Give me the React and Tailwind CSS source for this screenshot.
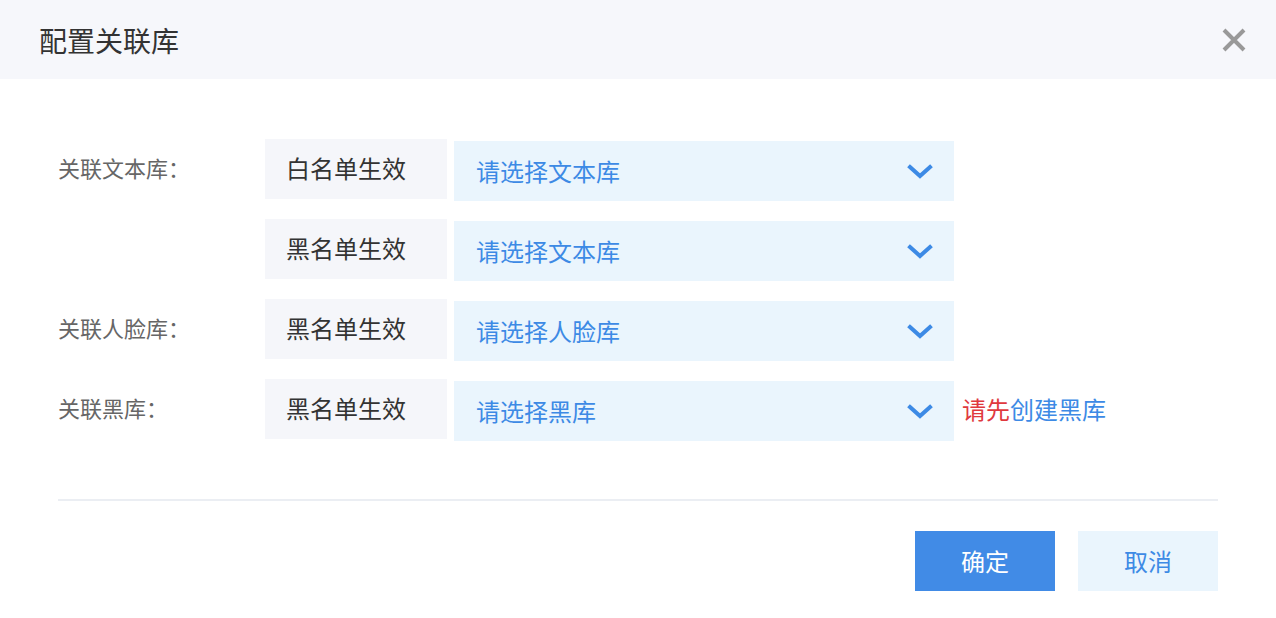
import React from "react";

const font = { fontFamily: '"Noto Sans CJK SC", "Noto Sans", sans-serif' };

function Chevron() {
  return (
    <svg width="26" height="18" viewBox="0 0 26 18" fill="none" className="mt-[2px]">
      <path d="M3 4 L13 13 L23 4" stroke="#3d8ae5" strokeWidth="4" strokeLinecap="square" strokeLinejoin="miter" />
    </svg>
  );
}

function Row({ label, tag, placeholder, extra }) {
  return (
    <div className="flex items-start h-[60px]">
      <div className="w-[207px] h-[60px] flex items-center pb-[4px] text-[22px] text-[#666666] leading-none">
        {label ? <span>{label}：</span> : null}
      </div>
      <div className="w-[182px] h-[60px] bg-[#f5f6fa] flex items-center pl-[21px] pb-[3px] text-[24px] text-[#333333] leading-none">
        {tag}
      </div>
      <div className="ml-[7px] mt-[2px] w-[500px] h-[60px] bg-[#eaf5fd] flex items-center justify-between pl-[22px] pr-[21px] text-[24px] text-[#3d8ae5] leading-none">
        <span>{placeholder}</span>
        <Chevron />
      </div>
      {extra}
    </div>
  );
}

export default function App() {
  return (
    <div className="w-[1276px] h-[618px] bg-white overflow-hidden" style={font}>
      <div className="h-[79px] bg-[#f6f7fb] flex items-center justify-between pl-[39px] pr-[30px]">
        <span className="text-[28px] text-[#333333] leading-none">配置关联库</span>
        <svg width="24" height="24" viewBox="0 0 24 24">
          <path d="M2 2 L22 22 M22 2 L2 22" stroke="#999999" strokeWidth="4" />
        </svg>
      </div>
      <div className="pl-[58px] pr-[58px] pt-[60px]">
        <div className="flex flex-col gap-[20px]">
          <Row label="关联文本库" tag="白名单生效" placeholder="请选择文本库" />
          <Row tag="黑名单生效" placeholder="请选择文本库" />
          <Row label="关联人脸库" tag="黑名单生效" placeholder="请选择人脸库" />
          <Row
            label="关联黑库"
            tag="黑名单生效"
            placeholder="请选择黑库"
            extra={
              <div className="ml-[8px] h-[60px] flex items-center text-[24px] leading-none">
                <span className="text-[#e0393e]">请先</span>
                <span className="text-[#3d8ae5]">创建黑库</span>
              </div>
            }
          />
        </div>
        <div className="mt-[60px] h-[2px] bg-[#ebeef3]" />
        <div className="mt-[30px] flex justify-end gap-[23px]">
          <button className="w-[140px] h-[60px] bg-[#418be6] text-white text-[24px] leading-none">确定</button>
          <button className="w-[140px] h-[60px] bg-[#eaf5fd] text-[#3d8ae5] text-[24px] leading-none">取消</button>
        </div>
      </div>
    </div>
  );
}
